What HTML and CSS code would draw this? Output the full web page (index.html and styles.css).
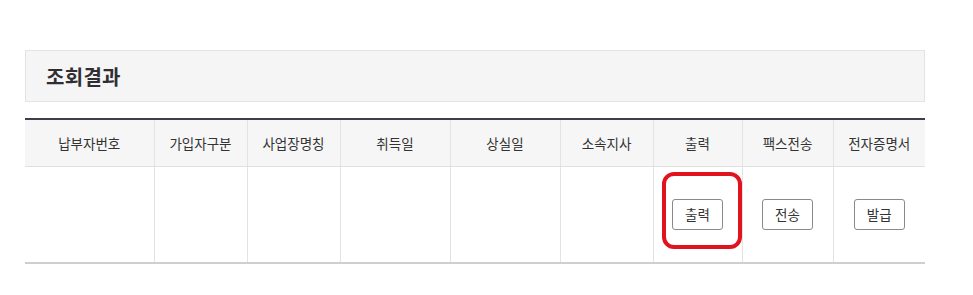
FILE: index.html
```html
<!DOCTYPE html>
<html lang="ko">
<head>
<meta charset="utf-8">
<link rel="stylesheet" href="styles.css">
</head>
<body>
<div class="page">
  <div class="title-box"><h2 class="title">조회결과</h2></div>
  <table class="result">
    <colgroup>
      <col style="width:129px"><col style="width:93px"><col style="width:93px"><col style="width:110px"><col style="width:110px"><col style="width:93px"><col style="width:89px"><col style="width:91px"><col style="width:92px">
    </colgroup>
    <thead>
      <tr>
        <th>납부자번호</th><th>가입자구분</th><th>사업장명칭</th><th>취득일</th><th>상실일</th><th>소속지사</th><th>출력</th><th>팩스전송</th><th>전자증명서</th>
      </tr>
    </thead>
    <tbody>
      <tr>
        <td></td><td></td><td></td><td></td><td></td><td></td>
        <td class="hl-cell"><button class="btn">출력</button><span class="highlight"></span></td>
        <td><button class="btn">전송</button></td>
        <td><button class="btn">발급</button></td>
      </tr>
    </tbody>
  </table>
</div>
</body>
</html>
```
FILE: styles.css
```css
html, body { margin: 0; padding: 0; background: #fff; }
body { font-family: "Noto Sans CJK KR", "Noto Sans", sans-serif; color: #333; }
.page { padding: 50px 48px 0 25px; width: 900px; }
.title-box {
  height: 52px;
  background: #f5f5f5;
  border: 1px solid #e4e4e4;
  box-sizing: border-box;
  display: flex;
  align-items: center;
  padding-left: 20px;
}
.title { margin: 0; font-size: 20px; font-weight: 700; color: #2f2f33; letter-spacing: 0.3px; }
.result {
  margin-top: 16px;
  width: 900px;
  border-collapse: collapse;
  table-layout: fixed;
  border-top: 2px solid #3d404c;
  border-bottom: 2px solid #cfcfcf;
}
.result th {
  height: 47px;
  background: #f6f6f6;
  font-weight: 400;
  font-size: 13.5px;
  color: #333;
  border-bottom: 1px solid #e0e0e0;
  border-left: 1px solid #e3e3e3;
  padding: 0;
  box-sizing: border-box;
}
.result th:first-child, .result td:first-child { border-left: none; }
.result td {
  height: 97px;
  border-left: 1px solid #e3e3e3;
  padding: 0;
  text-align: center;
  vertical-align: middle;
  box-sizing: border-box;
}
.btn {
  width: 51px;
  height: 31px;
  background: #fff;
  border: 1px solid #8a8a8a;
  border-radius: 3px;
  font-family: inherit;
  font-size: 13.5px;
  color: #333;
  padding: 0;
  cursor: pointer;
}
.hl-cell { position: relative; }
.highlight {
  position: absolute;
  left: 8px;
  top: 5px;
  width: 80px;
  height: 77px;
  box-sizing: border-box;
  border: 4px solid #e0131f;
  border-radius: 12px;
  pointer-events: none;
}
```
